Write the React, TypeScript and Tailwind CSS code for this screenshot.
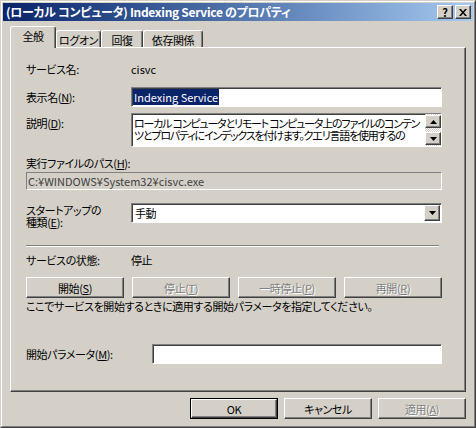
const raised =
  "border border-t-white border-l-white border-r-[#404040] border-b-[#404040] shadow-[inset_-1px_-1px_#808080]";
const sunken =
  "border border-t-[#808080] border-l-[#808080] border-r-white border-b-white shadow-[inset_1px_1px_#404040]";

function Button({
  label,
  disabled,
  width,
  isDefault,
}: {
  label: React.ReactNode;
  disabled?: boolean;
  width: string;
  isDefault?: boolean;
}) {
  const inner = (
    <div
      className={`${raised} flex h-full w-full items-center justify-center whitespace-nowrap bg-[#d4d0c8] ${
        disabled ? "text-[#808080] [text-shadow:1px_1px_0_#ffffff]" : "text-black"
      }`}
    >
      {label}
    </div>
  );
  if (isDefault) {
    return <div className={`${width} h-full border border-black`}>{inner}</div>;
  }
  return <div className={`${width} h-full`}>{inner}</div>;
}

function Tab({ label, selected, width }: { label: string; selected?: boolean; width: string }) {
  return (
    <div
      className={`${width} ${
        selected ? "relative z-10 -mb-px h-[22px] pb-[3px]" : "h-[17px] pt-px"
      } flex items-center justify-center whitespace-nowrap rounded-t-[3px] border-l border-t border-r border-l-white border-t-white border-r-[#404040] bg-[#d4d0c8] shadow-[inset_-1px_0_#808080]`}
    >
      {label}
    </div>
  );
}

function ArrowBtn({ dir }: { dir: "up" | "down" }) {
  return (
    <div className={`${raised} flex h-[13px] w-[16px] items-center justify-center bg-[#d4d0c8]`}>
      <svg width="7" height="4" viewBox="0 0 7 4">
        {dir === "up" ? (
          <polygon points="3.5,0 7,4 0,4" fill="#000" />
        ) : (
          <polygon points="0,0 7,0 3.5,4" fill="#000" />
        )}
      </svg>
    </div>
  );
}

export default function App() {
  return (
    <div className="h-[428px] w-[476px] border border-t-[#d4d0c8] border-l-[#d4d0c8] border-r-[#404040] border-b-[#404040] bg-[#d4d0c8] font-['Noto_Sans_CJK_JP',sans-serif] text-[11px] leading-[12px] tracking-[-0.4px] text-black [font-feature-settings:'palt']">
      <div className="h-full w-full border border-t-white border-l-white border-r-[#808080] border-b-[#808080] p-px">
        {/* title bar */}
        <div className="flex h-[18px] items-center justify-between bg-gradient-to-r from-[#0a246a] to-[#a6caf0] pl-[3px] pr-[2px]">
          <div className="whitespace-nowrap text-[12px] font-bold tracking-[-0.3px] text-white">
            (ローカル コンピュータ) Indexing Service のプロパティ
          </div>
          <div className="flex gap-[2px]">
            <div className={`${raised} flex h-[14px] w-[16px] items-center justify-center bg-[#d4d0c8] text-[11px] font-bold tracking-normal`}>
              ?
            </div>
            <div className={`${raised} flex h-[14px] w-[16px] items-center justify-center bg-[#d4d0c8]`}>
              <svg width="8" height="7" viewBox="0 0 8 7">
                <path d="M0 0h2l2 2.5L6 0h2L5 3.5 8 7H6L4 4.5 2 7H0l3-3.5z" fill="#000" />
              </svg>
            </div>
          </div>
        </div>

        <div className="px-[7px]">
          {/* tabs */}
          <div className="mt-[5px] flex items-end">
            <Tab label="全般" selected width="w-[46px]" />
            <Tab label="ログオン" width="w-[45px]" />
            <Tab label="回復" width="w-[42px]" />
            <Tab label="依存関係" width="w-[60px]" />
          </div>

          {/* panel */}
          <div className="h-[345px] border border-t-white border-l-white border-r-[#404040] border-b-[#404040] shadow-[inset_-1px_-1px_#808080]">
            <div className="ml-[15px] flex w-[416px] flex-col whitespace-nowrap">
              <div className="mt-[12px] flex h-[18px] items-center">
                <div className="w-[105px]">サービス名:</div>
                <div className="tracking-normal">cisvc</div>
              </div>

              <div className="mt-[9px] flex h-[20px] items-center">
                <div className="w-[105px]">
                  表示名(<span className="underline">N</span>):
                </div>
                <div className={`${sunken} flex h-[20px] w-[311px] items-center bg-white pl-px`}>
                  <span className="bg-[#0a246a] px-px py-[2px] tracking-normal text-white">Indexing Service</span>
                </div>
              </div>

              <div className="mt-[6px] flex h-[34px]">
                <div className="w-[105px] pt-[4px]">
                  説明(<span className="underline">D</span>):
                </div>
                <div className={`${sunken} flex h-[34px] w-[311px] bg-white`}>
                  <div className="flex-1 overflow-hidden pl-[2px] pt-[3px] leading-[12px] tracking-[-1.2px]">
                    <div>ローカル コンピュータとリモート コンピュータ上のファイルのコンテン</div>
                    <div>ツとプロパティにインデックスを付けます。クエリ言語を使用するの</div>
                  </div>
                  <div className="flex w-[16px] flex-col justify-between bg-[repeating-conic-gradient(#ffffff_0_25%,#d4d0c8_0_50%)] bg-[length:2px_2px] py-px">
                    <ArrowBtn dir="up" />
                    <ArrowBtn dir="down" />
                  </div>
                </div>
              </div>

              <div className="mt-[10px] h-[12px]">
                実行ファイルのパス(<span className="underline">H</span>):
              </div>

              <div className={`${sunken} mt-[3px] flex h-[18px] items-center pl-px tracking-normal text-[#404040] shadow-none`}>
                C:¥WINDOWS¥System32¥cisvc.exe
              </div>

              <div className="mt-[13px] flex h-[25px]">
                <div className="w-[105px] pt-px">
                  <div>スタートアップの</div>
                  <div>
                    種類(<span className="underline">E</span>):
                  </div>
                </div>
                <div className={`${sunken} flex h-[20px] w-[311px] items-center bg-white pl-[3px] pr-px`}>
                  <div className="flex-1">手動</div>
                  <div className={`${raised} flex h-[16px] w-[16px] items-center justify-center bg-[#d4d0c8]`}>
                    <svg width="7" height="4" viewBox="0 0 7 4">
                      <polygon points="0,0 7,0 3.5,4" fill="#000" />
                    </svg>
                  </div>
                </div>
              </div>

              <div className="mt-[17px] h-[2px] w-[413px] border-t border-b border-t-[#808080] border-b-white" />

              <div className="mt-[7px] flex h-[12px] items-center">
                <div className="w-[105px]">サービスの状態:</div>
                <div>停止</div>
              </div>

              <div className="mt-[11px] flex h-[21px] justify-between">
                <Button
                  width="w-[98px]"
                  label={
                    <>
                      開始(<span className="underline">S</span>)
                    </>
                  }
                />
                <Button
                  width="w-[98px]"
                  disabled
                  label={
                    <>
                      停止(<span className="underline">T</span>)
                    </>
                  }
                />
                <Button
                  width="w-[98px]"
                  disabled
                  label={
                    <>
                      一時停止(<span className="underline">P</span>)
                    </>
                  }
                />
                <Button
                  width="w-[98px]"
                  disabled
                  label={
                    <>
                      再開(<span className="underline">R</span>)
                    </>
                  }
                />
              </div>

              <div className="mt-[2px] h-[12px]">
                ここでサービスを開始するときに適用する開始パラメータを指定してください。
              </div>

              <div className="mt-[32px] flex h-[20px] items-center">
                <div className="w-[126px]">
                  開始パラメータ(<span className="underline">M</span>):
                </div>
                <div className={`${sunken} h-[20px] flex-1 bg-white`} />
              </div>
            </div>
          </div>

          {/* bottom buttons */}
          <div className="mt-[6px] flex h-[21px] justify-end gap-[6px]">
            <Button width="w-[88px]" isDefault label="OK" />
            <Button width="w-[88px]" label="キャンセル" />
            <Button
              width="w-[88px]"
              disabled
              label={
                <>
                  適用(<span className="underline">A</span>)
                </>
              }
            />
          </div>
        </div>
      </div>
    </div>
  );
}
